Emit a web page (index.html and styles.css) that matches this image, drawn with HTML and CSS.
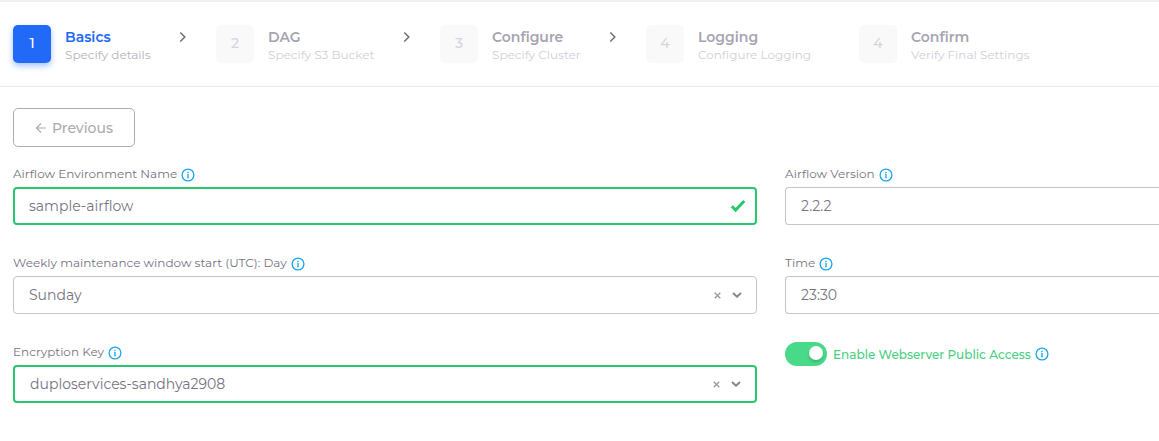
FILE: index.html
```html
<!DOCTYPE html>
<html lang="en">
<head>
<meta charset="utf-8">
<meta name="viewport" content="width=device-width, initial-scale=1">
<title>Airflow Environment</title>
<link rel="stylesheet" href="styles.css">
</head>
<body>
<svg class="symbols" aria-hidden="true">
  <symbol id="info" viewBox="0 0 14 14"><circle cx="7" cy="7" r="5.9" fill="none" stroke="currentColor" stroke-width="1.3"/><path d="M7 6v4" fill="none" stroke="currentColor" stroke-width="1.3"/><path d="M6 6.1h1M6 9.9h2" fill="none" stroke="currentColor" stroke-width=".6"/><path d="M6.3 3.8h1.4v1.2H6.3z" fill="currentColor"/></symbol>
  <symbol id="next" viewBox="0 0 8 12"><path d="M1.3 1.5 5.8 6l-4.5 4.5" fill="none" stroke="currentColor" stroke-width="1.5"/></symbol>
  <symbol id="down" viewBox="0 0 10 6"><path d="M1 1l4 3.7L9 1" fill="none" stroke="currentColor" stroke-width="2"/></symbol>
  <symbol id="clear" viewBox="0 0 7 7"><path d="M.7.7l5.6 5.6M6.3.7.7 6.3" fill="none" stroke="currentColor" stroke-width="1.3"/></symbol>
</svg>
<header>
  <ol class="steps">
    <li class="step active" aria-current="step"><span class="number">1</span><div class="caption"><strong>Basics</strong><span>Specify details</span></div><svg class="next"><use href="#next"/></svg></li>
    <li class="step"><span class="number">2</span><div class="caption"><strong>DAG</strong><span>Specify S3 Bucket</span></div><svg class="next"><use href="#next"/></svg></li>
    <li class="step"><span class="number">3</span><div class="caption"><strong>Configure</strong><span>Specify Cluster</span></div><svg class="next"><use href="#next"/></svg></li>
    <li class="step"><span class="number">4</span><div class="caption"><strong>Logging</strong><span>Configure Logging</span></div></li>
    <li class="step"><span class="number">4</span><div class="caption"><strong>Confirm</strong><span>Verify Final Settings</span></div></li>
  </ol>
</header>
<main>
  <button class="previous" type="button"><svg viewBox="0 0 12 12"><path d="M11 6H1.7M6 1.5 1.5 6 6 10.5" fill="none" stroke="currentColor" stroke-width="1.1"/></svg>Previous</button>
  <form class="fields">
    <div class="field">
      <div class="label"><label for="name">Airflow Environment Name</label><svg class="info"><use href="#info"/></svg></div>
      <div class="control valid checked"><input id="name" type="text" value="sample-airflow"><svg class="check" viewBox="0 0 16 14"><path d="M1.8 7.2 5.6 11 14.2 2" fill="none" stroke="currentColor" stroke-width="3"/></svg></div>
    </div>
    <div class="field">
      <div class="label"><label for="version">Airflow Version</label><svg class="info"><use href="#info"/></svg></div>
      <div class="control bleed"><select id="version"><option>2.2.2</option></select></div>
    </div>
    <div class="field">
      <div class="label"><label for="day">Weekly maintenance window start (UTC): Day</label><svg class="info"><use href="#info"/></svg></div>
      <div class="control"><select id="day"><option>Sunday</option></select><button class="clear" type="button" aria-label="Clear day"><svg><use href="#clear"/></svg></button><svg class="down"><use href="#down"/></svg></div>
    </div>
    <div class="field">
      <div class="label"><label for="time">Time</label><svg class="info"><use href="#info"/></svg></div>
      <div class="control bleed"><select id="time"><option>23:30</option></select></div>
    </div>
    <div class="field">
      <div class="label"><label for="key">Encryption Key</label><svg class="info"><use href="#info"/></svg></div>
      <div class="control valid"><select id="key"><option>duploservices-sandhya2908</option></select><button class="clear" type="button" aria-label="Clear key"><svg><use href="#clear"/></svg></button><svg class="down"><use href="#down"/></svg></div>
    </div>
    <div class="toggle">
      <input id="access" type="checkbox" role="switch" checked><label for="access">Enable Webserver Public Access</label><svg class="info"><use href="#info"/></svg>
    </div>
  </form>
</main>
</body>
</html>
```

FILE: styles.css
```css
* { box-sizing: border-box; }
body {
  margin: 0;
  background: #fff;
  border-top: 2px solid #f0f0f0;
  color: #767382;
  font-family: Montserrat, Inter, sans-serif;
  font-size: 14px;
  overflow-x: hidden;
}
.symbols { position: absolute; width: 0; height: 0; }
svg { flex: none; }
header { padding: 23px 13px; border-bottom: 1px solid #ebebed; }
.steps {
  display: grid;
  grid-template-columns: 203px 224px 206px 213px auto;
  margin: 0;
  padding: 0;
  list-style: none;
}
.step { display: flex; align-items: flex-start; }
.number {
  flex: none;
  width: 38px;
  height: 38px;
  border-radius: 5px;
  background: #f9f9f9;
  color: #d5d5dc;
  font-weight: 500;
  line-height: 36px;
  text-align: center;
}
.active .number {
  background: #2169f7;
  color: #fff;
  box-shadow: 0 3px 6px rgba(33, 105, 247, .4);
}
.caption {
  display: flex;
  flex-direction: column;
  height: 38px;
  padding: 3px 0 0 14px;
  white-space: nowrap;
}
.caption strong { color: #a6a4b0; font-weight: 600; line-height: 18px; }
.caption span { color: #d0cfd6; font-size: 12px; line-height: 18px; }
.active strong { color: #2169f7; }
.active .caption span { color: #b5b3bd; }
.next { width: 8px; height: 12px; margin: 6px 29px 0 auto; color: #6e6b7b; }
main { padding: 21px 0 38px 13px; }
.previous {
  display: flex;
  align-items: center;
  justify-content: center;
  gap: 5px;
  width: 122px;
  height: 39px;
  padding: 0;
  border: 1px solid #acacac;
  border-radius: 5px;
  background: #fff;
  color: #acacac;
  font: inherit;
  font-weight: 500;
}
.previous svg { width: 12px; height: 12px; }
.fields {
  display: grid;
  grid-template-columns: 199fr 100fr;
  gap: 28px;
  margin-top: 17px;
}
.field { min-width: 0; }
.label {
  display: flex;
  align-items: flex-start;
  gap: 4px;
  height: 20px;
  margin-bottom: 3px;
  font-size: 12px;
  line-height: 20px;
}
.info { width: 14px; height: 14px; color: #1ba5ee; }
.label .info { margin-top: 4px; }
.control {
  display: flex;
  align-items: center;
  height: 38px;
  padding-right: 14px;
  border: 1px solid #c5c5c7;
  border-radius: 4px;
  background: #fff;
}
.control.valid { border: 2px solid #28c76f; }
.control.checked { padding-right: 9px; }
.control.bleed { border-right: 0; border-radius: 4px 0 0 4px; }
.control input, .control select {
  flex: 1;
  min-width: 0;
  height: 100%;
  padding: 0 0 0 15px;
  border: 0;
  outline: 0;
  appearance: none;
  background: transparent;
  color: inherit;
  font: inherit;
}
.control input { padding-left: 14px; }
.check { width: 16px; height: 14px; color: #28c76f; }
.control .clear {
  display: flex;
  padding: 0;
  margin-right: 11px;
  border: 0;
  background: none;
  color: #999;
}
.clear svg { width: 7px; height: 7px; }
.down { width: 10px; height: 6px; color: #888; }
.toggle {
  display: flex;
  align-items: center;
  height: 24px;
  font-size: 12px;
  font-weight: 500;
  color: #48cf80;
  white-space: nowrap;
}
.toggle input {
  display: flex;
  align-items: center;
  justify-content: flex-end;
  flex: none;
  width: 42px;
  height: 24px;
  margin: 0 6px 0 0;
  padding: 0 4px 2px 0;
  appearance: none;
  border-radius: 12px;
  background: #48da89;
}
.toggle input::before {
  content: "";
  width: 14px;
  height: 14px;
  border-radius: 50%;
  background: #fff;
  box-shadow: 0 2px 3px rgba(20, 20, 20, .2);
}
.toggle .info { margin-left: 4px; }
```
